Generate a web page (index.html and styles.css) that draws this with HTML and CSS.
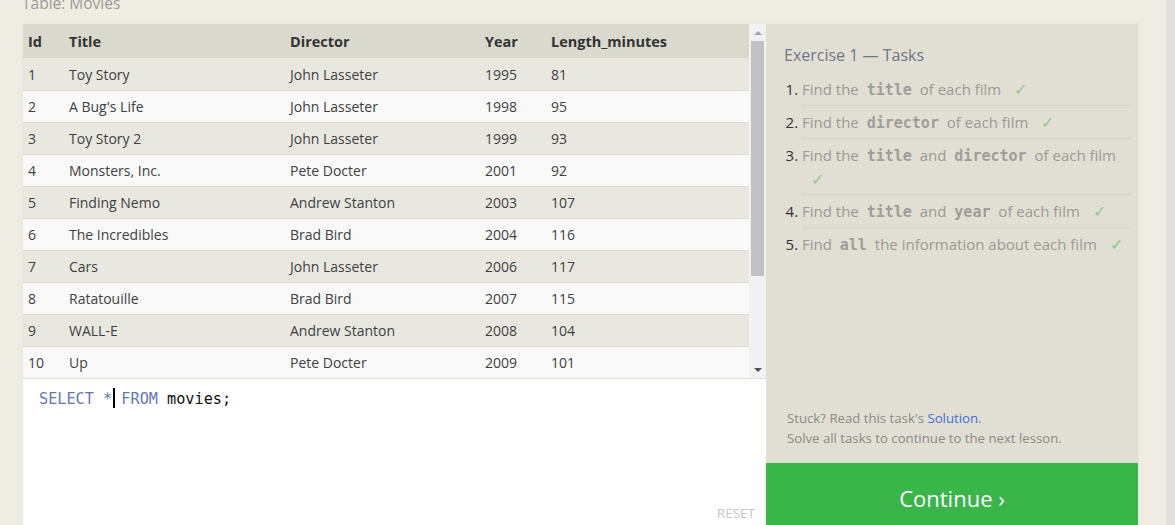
FILE: index.html
```html
<!DOCTYPE html>
<html>
<head>
<meta charset="utf-8">
<link rel="stylesheet" href="styles.css">
</head>
<body>
<div class="page">
  <div class="main">
    <div class="caption">Table: Movies</div>
    <div class="widget">
      <div class="left">
        <div class="table-area">
          <div class="table">
            <div class="row head"><span class="c-id">Id</span><span class="c-title">Title</span><span class="c-dir">Director</span><span class="c-year">Year</span><span class="c-len">Length_minutes</span></div>
            <div class="row odd"><span class="c-id">1</span><span class="c-title">Toy Story</span><span class="c-dir">John Lasseter</span><span class="c-year">1995</span><span class="c-len">81</span></div>
            <div class="row even"><span class="c-id">2</span><span class="c-title">A Bug's Life</span><span class="c-dir">John Lasseter</span><span class="c-year">1998</span><span class="c-len">95</span></div>
            <div class="row odd"><span class="c-id">3</span><span class="c-title">Toy Story 2</span><span class="c-dir">John Lasseter</span><span class="c-year">1999</span><span class="c-len">93</span></div>
            <div class="row even"><span class="c-id">4</span><span class="c-title">Monsters, Inc.</span><span class="c-dir">Pete Docter</span><span class="c-year">2001</span><span class="c-len">92</span></div>
            <div class="row odd"><span class="c-id">5</span><span class="c-title">Finding Nemo</span><span class="c-dir">Andrew Stanton</span><span class="c-year">2003</span><span class="c-len">107</span></div>
            <div class="row even"><span class="c-id">6</span><span class="c-title">The Incredibles</span><span class="c-dir">Brad Bird</span><span class="c-year">2004</span><span class="c-len">116</span></div>
            <div class="row odd"><span class="c-id">7</span><span class="c-title">Cars</span><span class="c-dir">John Lasseter</span><span class="c-year">2006</span><span class="c-len">117</span></div>
            <div class="row even"><span class="c-id">8</span><span class="c-title">Ratatouille</span><span class="c-dir">Brad Bird</span><span class="c-year">2007</span><span class="c-len">115</span></div>
            <div class="row odd"><span class="c-id">9</span><span class="c-title">WALL-E</span><span class="c-dir">Andrew Stanton</span><span class="c-year">2008</span><span class="c-len">104</span></div>
            <div class="row even"><span class="c-id">10</span><span class="c-title">Up</span><span class="c-dir">Pete Docter</span><span class="c-year">2009</span><span class="c-len">101</span></div>
          </div>
          <div class="vscroll">
            <div class="arrow up"></div>
            <div class="track"><div class="thumb"></div></div>
            <div class="arrow down"></div>
          </div>
        </div>
        <div class="editor">
          <div class="code"><span class="kw">SELECT</span> <span class="op">*</span><span class="cursor"></span> <span class="kw">FROM</span> movies;</div>
          <div class="reset">RESET</div>
        </div>
      </div>
      <div class="right">
        <div class="tasks">
          <h2 class="tasks-title">Exercise 1 — Tasks</h2>
          <ol class="task-list">
            <li>Find the <code>title</code> of each film <span class="check">✓</span></li>
            <li>Find the <code>director</code> of each film <span class="check">✓</span></li>
            <li class="wrap">Find the <code>title</code> and <code>director</code> of each film <span class="check">✓</span></li>
            <li>Find the <code>title</code> and <code>year</code> of each film <span class="check">✓</span></li>
            <li>Find <code>all</code> the information about each film <span class="check">✓</span></li>
          </ol>
        </div>
        <div class="help">
          <p>Stuck? Read this task's <a class="link">Solution</a>.</p>
          <p>Solve all tasks to continue to the next lesson.</p>
        </div>
        <div class="continue">Continue ›</div>
      </div>
    </div>
  </div>
  <div class="page-scroll"></div>
</div>
</body>
</html>
```

FILE: styles.css
```css
html, body {
  margin: 0;
  padding: 0;
  height: 525px;
  overflow: hidden;
  background: #efece4;
  font-family: "Open Sans", "Noto Sans", sans-serif;
}

.page {
  display: flex;
  height: 525px;
}

.main {
  padding-left: 22px;
  width: 1117px;
}

.page-scroll {
  margin-left: 27px;
  width: 9px;
  background: #e1dedb;
}

.caption {
  margin-top: -7px;
  height: 30px;
  line-height: 20px;
  font-size: 15.5px;
  color: #9a9a98;
}

.widget {
  display: flex;
  border: 1px solid #e8e6de;
  border-bottom: none;
  height: 509px;
}

.left {
  width: 743px;
  display: flex;
  flex-direction: column;
}

.table-area {
  display: flex;
  height: 354px;
  border-bottom: 1px solid #e2e0d8;
}

.table {
  width: 726px;
  font-size: 14px;
  color: #404040;
}

.row {
  display: flex;
  align-items: center;
  height: 31px;
  border-top: 1px solid #dedcd4;
}

.row.head {
  height: 34px;
  border-top: none;
  background: #dad9cd;
  font-weight: 700;
  font-size: 14.5px;
  color: #333;
}

.row.odd { background: #e9e8e0; }
.row.even { background: #f9f9f9; }
.row.odd:nth-child(2) { border-top: none; height: 32px; }

.row span { padding-left: 5px; box-sizing: border-box; }
.c-id { width: 41px; }
.c-title { width: 221px; }
.c-dir { width: 195px; }
.c-year { width: 66px; }
.c-len { flex: 1; }

.vscroll {
  width: 17px;
  background: #f1f1f1;
  display: flex;
  flex-direction: column;
  align-items: center;
}

.arrow {
  height: 17px;
  width: 17px;
  display: flex;
  align-items: center;
  justify-content: center;
}

.arrow.up::before {
  content: "";
  border-left: 4px solid transparent;
  border-right: 4px solid transparent;
  border-bottom: 4px solid #a3a3a3;
}

.arrow.down::before {
  content: "";
  border-left: 4px solid transparent;
  border-right: 4px solid transparent;
  border-top: 4px solid #505050;
}

.arrow.down { margin-top: auto; }

.track {
  width: 13px;
  flex: 1;
}

.thumb {
  height: 235px;
  background: #c1c1c1;
}

.editor {
  flex: 1;
  background: #fff;
  position: relative;
  padding: 8px 16px 0 16px;
}

.code {
  font-family: "DejaVu Sans Mono", "Liberation Mono", monospace;
  font-size: 15.2px;
  line-height: 24px;
  color: #111;
  white-space: pre;
}

.kw { color: #6577b3; }
.op { color: #6577b3; }

.cursor {
  display: inline-block;
  width: 2px;
  height: 20px;
  background: #000;
  vertical-align: -4px;
  margin-left: 1px;
  margin-right: -3px;
}

.reset {
  position: absolute;
  right: 11px;
  top: 125px;
  font-size: 13.5px;
  color: #c8c8c8;
}

.right {
  flex: 1;
  background: #e1dfd4;
  display: flex;
  flex-direction: column;
}

.tasks {
  padding: 19px 7px 0 17px;
  flex: 1;
}

.tasks-title {
  margin: 0 0 6px 1px;
  font-size: 16px;
  font-weight: 400;
  line-height: 24px;
  color: #6f7784;
}

.task-list {
  margin: 0;
  padding-left: 19px;
  font-size: 15px;
  color: #9b9a96;
}

.task-list li {
  line-height: 24px;
  padding: 4px 0 4px 0;
  border-bottom: 1px solid #d6d4ca;
}

.task-list li.wrap { padding-bottom: 3px; }

.task-list li:last-child { border-bottom: none; }

.task-list li::marker {
  color: #333;
}

.task-list code {
  font-family: "DejaVu Sans Mono", "Liberation Mono", monospace;
  font-weight: 700;
  font-size: 15px;
  line-height: 1;
  color: #9e9d99;
  margin: 0 4px;
}

.check {
  color: #8dcb8d;
  font-size: 16px;
  line-height: 1;
  margin-left: 9px;
}

.help {
  padding: 0 0 15px 21px;
  font-size: 13.2px;
  line-height: 20px;
  color: #8a8a86;
}

.help p { margin: 0; }

.link { color: #3b6fdf; }

.continue {
  height: 70px;
  background: #3ab54a;
  color: #fff;
  font-size: 22px;
  display: flex;
  align-items: center;
  justify-content: center;
}
```
